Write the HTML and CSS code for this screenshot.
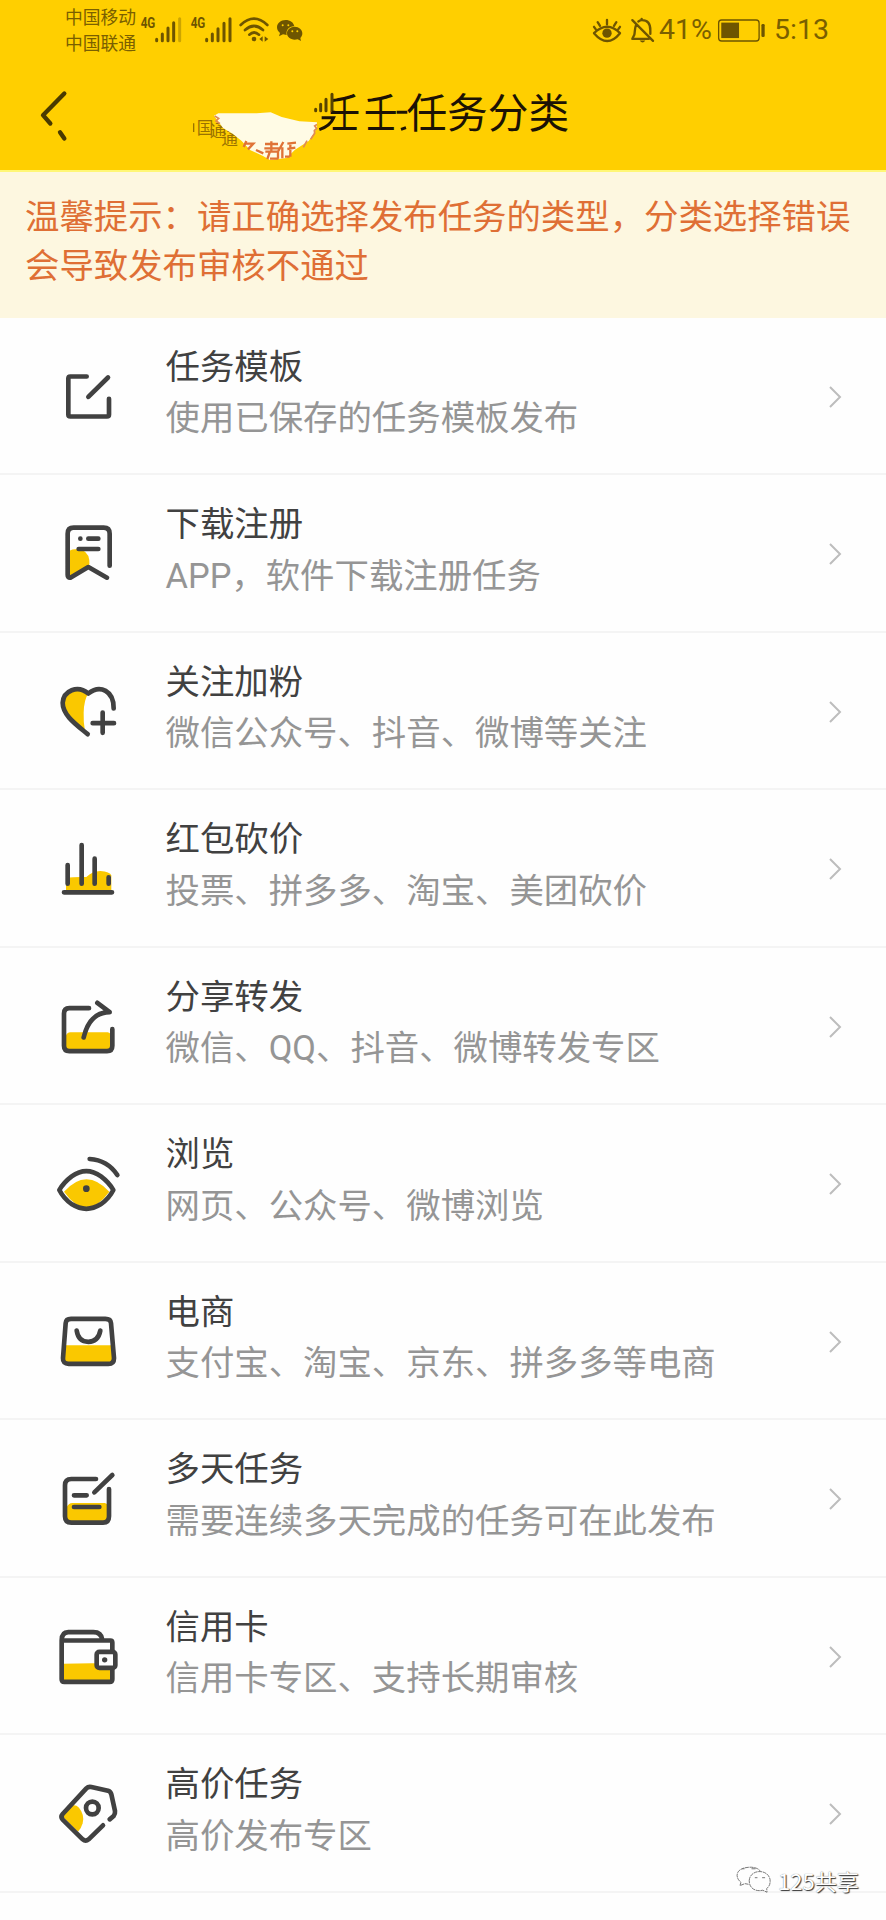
FILE: index.html
```
<!DOCTYPE html>
<html lang="zh-CN">
<head>
<meta charset="utf-8">
<title>任务分类</title>
<link rel="stylesheet" href="styles.css">
</head>
<body>
<div class="screen">
  <header class="header">
    <div class="status">
      <div class="carriers"><span>中国移动</span><span>中国联通</span></div>
      <svg class="signals" viewBox="411 0 510 180">
        <g class="status-stroke" stroke-width="9">
          <path d="M470 118v4M487 102v20M504 84v38M521 68v54"/><path class="faint" d="M539 56v66"/>
          <path d="M620 118v4M637 102v20M654 86v36M672 70v52M690 56v66"/>
          <path stroke-width="8" d="M722 75q40-38 80 0M735 90q27-24 54 0M748 104q14-13 29 0"/>
        </g>
        <g class="status-fill">
          <text class="net" x="422" y="84" textLength="44" lengthAdjust="spacingAndGlyphs">4G</text>
          <text class="net" x="572" y="84" textLength="44" lengthAdjust="spacingAndGlyphs">4G</text>
          <circle cx="762" cy="117" r="7"/><path d="M788 109v16l-10-8zM794 109v16l11-8z"/>
          <path d="M857 60c-15 0-26 10-26 22 0 8 4 13 9 17l-3 10 12-6 11 2c-3-15 8-27 23-26-2-12-13-19-26-19z"/>
          <path d="M884 80c-13 0-23 9-23 20s10 19 23 19l9-1 10 5-2-9c4-4 6-8 6-14 0-11-10-20-23-20z"/>
        </g>
        <g fill="#ffcf00"><circle cx="848" cy="76" r="3"/><circle cx="865" cy="76" r="3"/><circle cx="877" cy="94" r="3"/><circle cx="892" cy="94" r="3"/></g>
      </svg>
      <div class="status-right">
        <svg class="eye-bell" viewBox="93 40 192 95">
          <g class="status-stroke" stroke-width="7">
            <path d="M99 97q40-38 78 0-38 47-78 0zM138 70V57M117 75l-7-11M159 75l7-11M104 85l-5-7M172 85l5-7"/>
            <path d="M214 58l62 62M225 73c-4 8-3 20-5 29l-6 12h49M232 62c5-3 8-4 10-4v-4M243 58c18 0 25 13 25 30v11"/>
          </g>
          <circle class="status-fill" cx="138" cy="97" r="14"/><path class="status-fill" d="M236 119h17q-8 12-17 0z"/>
        </svg>
        <span class="pct">41%</span>
        <svg class="battery" viewBox="472 52 147 76">
          <rect class="status-stroke" stroke-width="4" x="476" y="58" width="123" height="64" rx="9"/>
          <rect class="status-fill" x="484" y="66" width="54" height="47"/><rect class="status-fill" x="606" y="70" width="10" height="40" rx="4"/>
        </svg>
        <span class="clock">5:13</span>
      </div>
    </div>
    <div class="navbar">
      <svg class="back" viewBox="115 260 96 170"><path d="M194 279L130 344l22 25M181 395l13 19"/></svg>
      <h1 class="title"><span class="slim slim-a">壬</span><span class="slim slim-b">壬</span><span>任务分类</span></h1>
    </div>
    <svg class="smudge" viewBox="0 0 1260 330">
      <g class="ghost"><path d="M71 160v26"/><text x="80" y="193">国</text><text x="119" y="202">通</text><text x="154" y="224">通</text></g>
      <path class="blob" d="M132 137L145 130 260 130 302 127 335 141 388 154 441 157 440 174 432 190 416 213 375 239 350 264 300 270 279 258 240 240 215 213 188 191 159 174 146 156z"/>
      <path class="edge" d="M134 138l12 7-8 8 12 8M441 163l-7 5 6 7-7 7 1 8-12 18M400 232l11-20"/>
      <path class="red" d="M229 213l-8 18M224 221h26l-16 17M258 240l22 10M285 222h39M304 214v30M283 235h44M286 245h38v21M299 247l-7 20M300 266h25M340 216l-15 27M337 232v33M352 221l26-3M352 237l24-4M361 221v39M345 260h14"/>
      <path class="ink-sig" d="M437 118v4M452 103v19M468 88v34M486 73v49"/>
      <path class="ink" d="M455 143h36q-10 25-43 36M491 122v10M680 127h32M693 178l15-5"/>
    </svg>
  </header>

  <p class="notice">温馨提示：请正确选择发布任务的类型，分类选择错误会导致发布审核不通过</p>

  <main class="list">
    <div class="row">
      <svg class="icon" viewBox="30 13.5 240 240"><path class="line" d="M140 78H91q-6 0-6 6v108q0 6 6 6h110q6 0 6-6V145M204 81l-59 58"/></svg>
      <div class="text"><h2>任务模板</h2><p>使用已保存的任务模板发布</p></div><svg class="chevron" viewBox="0 0 14 24"><path d="M2 2l10 10L2 22"/></svg>
    </div>
    <div class="row">
      <svg class="icon" viewBox="30 486 240 240"><path class="fill" d="M84 604q12-7 30-7 31 4 34 34 2 12-3 20L92 683H84z"/><path class="line" d="M209 647V551q0-18-18-18H101q-18 0-18 18V675q0 9 8 8l54-32 56 32M145 566h30M116 597h59M121 566h.1"/></svg>
      <div class="text"><h2>下载注册</h2><p>APP，软件下载注册任务</p></div><svg class="chevron" viewBox="0 0 14 24"><path d="M2 2l10 10L2 22"/></svg>
    </div>
    <div class="row">
      <svg class="icon" viewBox="30 28.5 240 240"><path class="fill" d="M145 99Q115 76 90 93 67 110 70 142q8 30 65 70-5-24-4-55 1-40 14-58z"/><path class="line" d="M143 221C107 191 68 164 68 127 71 91 112 72 145 99 181 70 222 92 221 144M188 156v61M158 188h64"/></svg>
      <div class="text"><h2>关注加粉</h2><p>微信公众号、抖音、微博等关注</p></div><svg class="chevron" viewBox="0 0 14 24"><path d="M2 2l10 10L2 22"/></svg>
    </div>
    <div class="row">
      <svg class="icon" viewBox="30 501 240 240"><path class="fill" d="M78 653q28-3 61-2 18-18 42-18 29 2 33 13v45H78z"/><path class="line" d="M83 615v56M125 555v116M164 596v75M206 652v19M72 697H216"/></svg>
      <div class="text"><h2>红包砍价</h2><p>投票、拼多多、淘宝、美团砍价</p></div><svg class="chevron" viewBox="0 0 14 24"><path d="M2 2l10 10L2 22"/></svg>
    </div>
    <div class="row">
      <svg class="icon" viewBox="30 13.5 240 240"><path class="fill" d="M77 167q4-12 14-12h112q10 2 10 10v46H77z"/><path class="line" d="M147 83H88q-16 0-16 16v97q0 16 16 16h113q16 0 16-16V146M131 171q18-76 78-76l-37-28"/></svg>
      <div class="text"><h2>分享转发</h2><p>微信、QQ、抖音、微博转发专区</p></div><svg class="chevron" viewBox="0 0 14 24"><path d="M2 2l10 10L2 22"/></svg>
    </div>
    <div class="row">
      <svg class="icon" viewBox="30 486 240 240"><path class="fill" d="M72 635q67-75 136 0-69 94-136 0z"/><path class="line" d="M58 630q12-22 37-41 44-31 88 0 25 19 37 41-13 26-38 43-43 27-86 0-25-17-38-43zM149 537q53 3 83 48"/><circle class="dot" cx="139" cy="626" r="10"/></svg>
      <div class="text"><h2>浏览</h2><p>网页、公众号、微博浏览</p></div><svg class="chevron" viewBox="0 0 14 24"><path d="M2 2l10 10L2 22"/></svg>
    </div>
    <div class="row">
      <svg class="icon" viewBox="30 28.5 240 240"><path class="fill" d="M75 164H217v54H72z"/><path class="line" d="M93 85h103q16 0 17 13l9 105q0 17-17 17H86q-18 0-17-17l8-105q1-13 16-13zM110 120q5 34 35 34 30-1 36-34"/></svg>
      <div class="text"><h2>电商</h2><p>支付宝、淘宝、京东、拼多多等电商</p></div><svg class="chevron" viewBox="0 0 14 24"><path d="M2 2l10 10L2 22"/></svg>
    </div>
    <div class="row">
      <svg class="icon" viewBox="30 501 240 240"><path class="fill" d="M79 653q7-15 20-14h95q13 4 14 15v43H79z"/><path class="line" d="M168 567H94q-19 0-19 19v93q0 19 19 19h95q18 0 18-19V597M102 616h38M102 651h76M217 555l-54 52"/></svg>
      <div class="text"><h2>多天任务</h2><p>需要连续多天完成的任务可在此发布</p></div><svg class="chevron" viewBox="0 0 14 24"><path d="M2 2l10 10L2 22"/></svg>
    </div>
    <div class="row">
      <svg class="icon" viewBox="30 43.5 240 240"><path class="fill" d="M70 190q70-3 142-1v54H70z"/><path class="line" d="M65 120H211q6 0 6 6v24M65 120V236q0 8 8 8h136q8 0 8-8v-30M65 120q0-25 20-25h75q24 0 27 23"/><rect class="line box" x="170" y="154" width="56" height="48" rx="8"/><circle class="dot" cx="194" cy="178" r="8"/></svg>
      <div class="text"><h2>信用卡</h2><p>信用卡专区、支持长期审核</p></div><svg class="chevron" viewBox="0 0 14 24"><path d="M2 2l10 10L2 22"/></svg>
    </div>
    <div class="row">
      <svg class="icon" viewBox="30 516 240 240"><path class="fill" d="M88 620q17-10 29 3 18 22 11 47-5 17-14 25L67 649z"/><path class="line" d="M189 676l-43 42q-9 8-18 0L68 659q-7-9 0-17l71-77q6-6 15-4l50 11q8 3 10 11l11 50q1 9-4 15l-12 10"/><circle class="line" cx="157" cy="624" r="19"/></svg>
      <div class="text"><h2>高价任务</h2><p>高价发布专区</p></div><svg class="chevron" viewBox="0 0 14 24"><path d="M2 2l10 10L2 22"/></svg>
    </div>
  </main>
  <div class="watermark">
    <svg viewBox="105 260 112 90"><path d="M146 318l-11-2-15 6 3-10c-11-9-14-20-10-29 8-20 59-23 69-4M148 307c2-35 56-37 63-4 2 14-3 22-10 28l1 11-13-6c-21 5-41-5-41-29z"/><path d="M126 271h8M155 271h12M165 298h8M187 298h9"/></svg>
    <span>125共享</span>
  </div>
</div>
</body>
</html>
```
FILE: styles.css
```
* { box-sizing: border-box; }
body { margin: 0; background: #fefefe; font-family: Roboto, "Noto Sans CJK SC", sans-serif; }
.screen { position: relative; width: 886px; height: 1920px; overflow: hidden; }
h1, h2, p { margin: 0; font-weight: 400; }
svg { display: block; flex: none; }

.header { position: relative; height: 170px; background: #ffcf00; }
.status { display: flex; height: 60px; padding: 0 59px 0 65px; color: #7a5f00; }
.carriers { display: flex; flex-direction: column; width: 72px; padding-top: 5px; font-size: 17.8px; line-height: 26px; white-space: nowrap; }
.signals { width: 170px; height: 60px; }
.status-stroke { fill: none; stroke: #6e5500; stroke-linecap: round; stroke-linejoin: round; }
.status-fill { fill: #6e5500; }
.faint { opacity: .35; }
.net { font: 700 43px Roboto, sans-serif; }
.status-right { display: flex; align-items: center; margin-left: auto; }
.eye-bell { width: 64px; height: 32px; }
.pct, .clock { font-size: 28.5px; line-height: 62px; }
.pct { width: 58px; margin-left: 3px; }
.battery { width: 49px; height: 25px; }
.clock { width: 53px; margin-left: 8px; }
.navbar { display: flex; height: 110px; padding-left: 38px; }
.back { width: 32px; height: 57px; margin-top: 27px; fill: none; stroke: #493a00; stroke-width: 13; stroke-linecap: round; stroke-linejoin: round; }
.title { display: flex; margin-left: 260px; color: #1c1204; font-size: 40.7px; line-height: 108px; white-space: nowrap; }
.slim { width: 40.7px; transform: scaleX(.76); transform-origin: left; }
.slim-a { margin-left: -1px; margin-right: -10px; }
.slim-b { margin-left: 4px; margin-right: 2px; transform: scaleX(.82); }
.smudge { position: absolute; left: 170px; top: 70px; width: 420px; height: 110px; fill: none; }
.ghost { fill: #9a7200; stroke: none; font: 50px "Noto Sans CJK SC", sans-serif; }
.ghost path { stroke: #9a7200; stroke-width: 4; }
.blob { fill: #fffbe5; }
.edge { stroke: #e08a55; stroke-width: 5; }
.red { stroke: #df7337; stroke-width: 7; }
.ink-sig { stroke: #594400; stroke-width: 9; stroke-linecap: round; }
.ink { stroke: #1c1204; stroke-width: 9; }

.notice { height: 147.5px; margin-right: -10px; padding: 21px 31px 0 25px; border-top: 2px solid #fff777; background: #fdf7e0; color: #df6f35; font-size: 34.4px; line-height: 49px; word-break: break-all; }

.row { display: flex; align-items: flex-start; height: 157.5px; padding: 0 44px 0 48px; border-bottom: 2px solid #f4f4f4; }
.list .icon { width: 80px; height: 80px; margin: 37px 35.5px 0 2px; }
.text { flex: 1; padding-top: 24px; font-size: 34.4px; line-height: 51.5px; white-space: nowrap; }
.text h2 { font-size: inherit; color: #414141; }
.text p { color: #959595; }
.line { fill: none; stroke: #414141; stroke-width: 14; stroke-linecap: round; stroke-linejoin: round; }
.box { fill: #fefefe; }
.fill { fill: #fac800; }
.dot { fill: #414141; }
.chevron { width: 14px; height: 24px; margin-top: 67px; fill: none; stroke: #bdbdbd; stroke-width: 2; }

.watermark { position: absolute; left: 735px; top: 1865px; display: flex; align-items: center; gap: 6px; color: #fff; font: 22px/30px "Noto Sans CJK SC", sans-serif; text-shadow: 1px 1px 1px #333, 0 0 1px #777; }
.watermark svg { width: 37px; height: 30px; fill: #fefefe; stroke: #777; stroke-width: 3; stroke-dasharray: 12 2; }
```
